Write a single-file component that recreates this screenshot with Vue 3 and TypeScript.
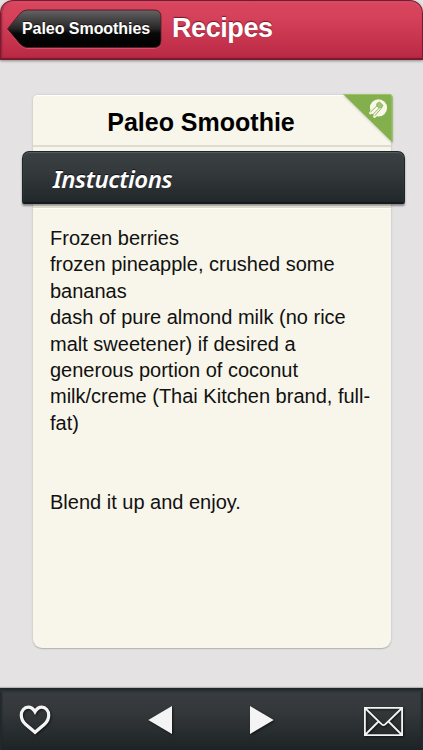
<script setup lang="ts">
const title: string = 'Paleo Smoothie'
const ingredients: string[] = [
  'Frozen berries',
  'frozen pineapple, crushed some',
  'bananas',
  'dash of pure almond milk (no rice',
  'malt sweetener) if desired a',
  'generous portion of coconut',
  'milk/creme (Thai Kitchen brand, full-',
  'fat)',
]
</script>

<template>
  <div class="screen">
    <header class="topbar">
      <button class="back" aria-label="Back">
        <svg class="back-shape" viewBox="0 0 156 40" aria-hidden="true">
          <defs>
            <linearGradient id="backFill" x1="0" y1="0" x2="0" y2="1">
              <stop offset="0" stop-color="#666464" />
              <stop offset="0.5" stop-color="#262525" />
              <stop offset="0.62" stop-color="#080808" />
              <stop offset="1" stop-color="#000" />
            </linearGradient>
          </defs>
          <path d="M1.500 20 L14 4.500 Q17.500 1 21 1 H148 Q155 1 155 8 V31.500 Q155 38.500 148 38.500 H21 Q17.500 38.500 14 35Z" fill="none" stroke="#e17686" stroke-opacity=".6" transform="translate(0 .8)" />
          <path d="M1.500 20 L14 4.500 Q17.500 1 21 1 H148 Q155 1 155 8 V31.500 Q155 38.500 148 38.500 H21 Q17.500 38.500 14 35Z" fill="url(#backFill)" stroke="#571b27" stroke-width="1" />
        </svg>
        <span class="back-label">Paleo Smoothies</span>
      </button>
      <h1>Recipes</h1>
    </header>

    <main>
      <article class="card">
        <div class="card-head">
          <h2>{{ title }}</h2>
          <svg class="ribbon" viewBox="0 0 50 50" aria-hidden="true">
            <path d="M0 0H46Q49.500 0 49.500 3.500V48.500Z" fill="#83b04c" />
            <path d="M1 .5H46Q49 .5 49 3.500V47" fill="none" stroke="#9bc565" />
            <circle cx="35.500" cy="13.800" r="8.600" fill="#f8f7e9" />
            <g fill="none" stroke-linecap="round">
              <path d="M27.500 19L34 12.500M31.500 22.500L38 15.500" stroke="#f8f7e9" stroke-width="2.800" />
              <path d="M34 9.500L36.500 8L40 11.300L38.500 14L35.500 13.500L34 12Z" fill="#a3c47a" stroke="#83b04c" stroke-width=".8" />
              <path d="M27.800 17.800L34.500 11.300M29.500 21L36 14.300M32 21.500L38 14.800" stroke="#83b04c" stroke-width=".9" />
            </g>
          </svg>
        </div>
        <div class="band"><h3>Instuctions</h3></div>
        <div class="rule"></div>
        <div class="body">
          <p v-for="line in ingredients" :key="line"><span>{{ line }}</span></p>
          <p class="closing"><span>Blend it up and enjoy.</span></p>
        </div>
      </article>
    </main>

    <footer class="toolbar">
      <button class="heart" aria-label="Favourite">
        <svg width="34" height="34" viewBox="0 0 34 34">
          <path d="M17 28.300L7.500 20.200C4.800 17.800 3.300 14.500 3.300 11.200C3.300 6.500 6.300 3.200 10.200 3.200C13.200 3.200 15.300 4.800 17 7.800C18.700 4.800 20.800 3.200 23.800 3.200C27.700 3.200 30.700 6.500 30.700 11.200C30.700 14.500 29.200 17.800 26.500 20.200Z" />
        </svg>
      </button>
      <button class="prev" aria-label="Previous">
        <svg width="24" height="28" viewBox="0 0 24 28"><path d="M.3 14L24 0V28Z" /></svg>
      </button>
      <button class="next" aria-label="Next">
        <svg width="24" height="28" viewBox="0 0 24 28"><path d="M23.700 14L0 0V28Z" /></svg>
      </button>
      <button class="mail" aria-label="Send by mail">
        <svg width="39" height="29" viewBox="0 0 39 29">
          <path d="M.9 .9H38.100V28.100H.9ZM1.500 1.500L17 16.500Q19.500 19.700 22 16.500L37.500 1.500M1.500 27.500L14.500 14.500M37.500 27.500L24.500 14.500" />
        </svg>
      </button>
    </footer>
  </div>
</template>

<style>
body {
  background: #120509;
}
</style>

<style scoped>
.screen {
  display: flex;
  flex-direction: column;
  height: 750px;
  font-family: "Liberation Sans", Arial, sans-serif;
  background: #e4e2e3;
}

h1,
h2,
h3,
p {
  margin: 0;
}

button {
  display: flex;
  padding: 0;
  border: 0;
  background: none;
}

.topbar {
  display: flex;
  flex: none;
  box-sizing: border-box;
  height: 60px;
  padding: 9px 0 0 5px;
  border: solid #791b2e;
  border-width: 1px 1px 2px;
  border-radius: 13px 13px 0 0;
  background: linear-gradient(#d9445e, #d7425b 25%, #ba2944);
  box-shadow: inset 0 2px 1px #e2627a66, inset 1px 0 2px #8b2037, 0 1px 3px #0006, 0 -13px 0 #e4e2e3;
}

.back {
  display: grid;
  width: 156px;
  height: 40px;
  margin-top: -1px;
}

.back-shape,
.back-label {
  grid-area: 1 / 1;
}

.back-shape {
  width: 156px;
  height: 40px;
}

.back-label {
  padding: 10px 0 0 16px;
  color: #fff;
  font: bold 16px/20px "Liberation Sans", Arial, sans-serif;
  letter-spacing: -0.050px;
  text-align: left;
  white-space: nowrap;
  text-shadow: 0 -1px #0008;
}

h1 {
  margin: 2px 0 0 10px;
  color: #fff;
  font-size: 27px;
  line-height: 33px;
  letter-spacing: -0.420px;
  text-shadow: 0 -1px 1px #71182b;
}

main {
  flex: 1;
  padding: 35px 32px 0 33px;
}

.card {
  height: 553px;
  border-radius: 5px 5px 9px 9px;
  background: #f8f6ea;
  box-shadow: 0 1px 1px #b7b5ae, 0 0 3px #0002, inset 0 1px #fffef8;
}

.card-head {
  display: grid;
  box-sizing: border-box;
  height: 52px;
  border-bottom: 2px solid #dddcd0;
}

.card-head h2 {
  grid-area: 1 / 1;
  padding-top: 12px;
  font-size: 25px;
  line-height: 30px;
  text-align: center;
  padding-right: 22px;
}

.ribbon {
  grid-area: 1 / 1;
  justify-self: end;
  width: 50px;
  height: 50px;
  margin: -1px -2px 0 0;
  filter: drop-shadow(0 1px 1px #0003);
}

.band {
  box-sizing: border-box;
  height: 53px;
  margin: 4px -14px 0 -11px;
  padding: 12px 0 0 30px;
  border: 1px solid #202628;
  border-bottom: 2px solid #151a1c;
  border-radius: 7px 7px 2px 2px;
  background: linear-gradient(#3b4042, #34393b 40%, #21272a);
  box-shadow: inset 0 1px 1px #526161, 0 2px 2px #0006;
}

h3 {
  color: #fff;
  font: italic 600 24px/30px "Noto Sans", sans-serif;
  letter-spacing: -0.420px;
  text-shadow: 0 -1px #111;
}

.rule {
  height: 3px;
  border-bottom: 1px solid #dddcd0;
  box-shadow: 0 1px #fffef8;
}

.body {
  padding: 17px 0 0 17px;
  color: #111;
  font-size: 20px;
  line-height: 26.400px;
  white-space: nowrap;
}

.closing {
  padding-top: 52.800px;
}

.toolbar {
  display: grid;
  flex: none;
  box-sizing: border-box;
  height: 62px;
  grid-template-columns: 130px 102px 114px 1fr;
  padding: 14px 0 0 18px;
  border-top: 2px solid #20282b;
  background: linear-gradient(#393d3f, #34383a 35%, #1d2326);
  box-shadow: inset 0 2px 2px #2b3235, inset 2px 0 2px #20272a, inset -2px 0 2px #20272a, 0 -1px 1px #0003;
}

.toolbar button {
  align-self: start;
}

.toolbar svg {
  fill: #f4f4f4;
  filter: drop-shadow(1px 1px 1px #0009);
}

.toolbar .heart svg,
.toolbar .mail svg {
  fill: none;
  stroke: #f4f4f4;
}

.heart svg {
  stroke-width: 3.200px;
}

.mail svg {
  stroke-width: 1.800px;
}

.prev,
.next {
  padding-top: 2px;
}

.mail {
  padding-top: 3px;
}
</style>
